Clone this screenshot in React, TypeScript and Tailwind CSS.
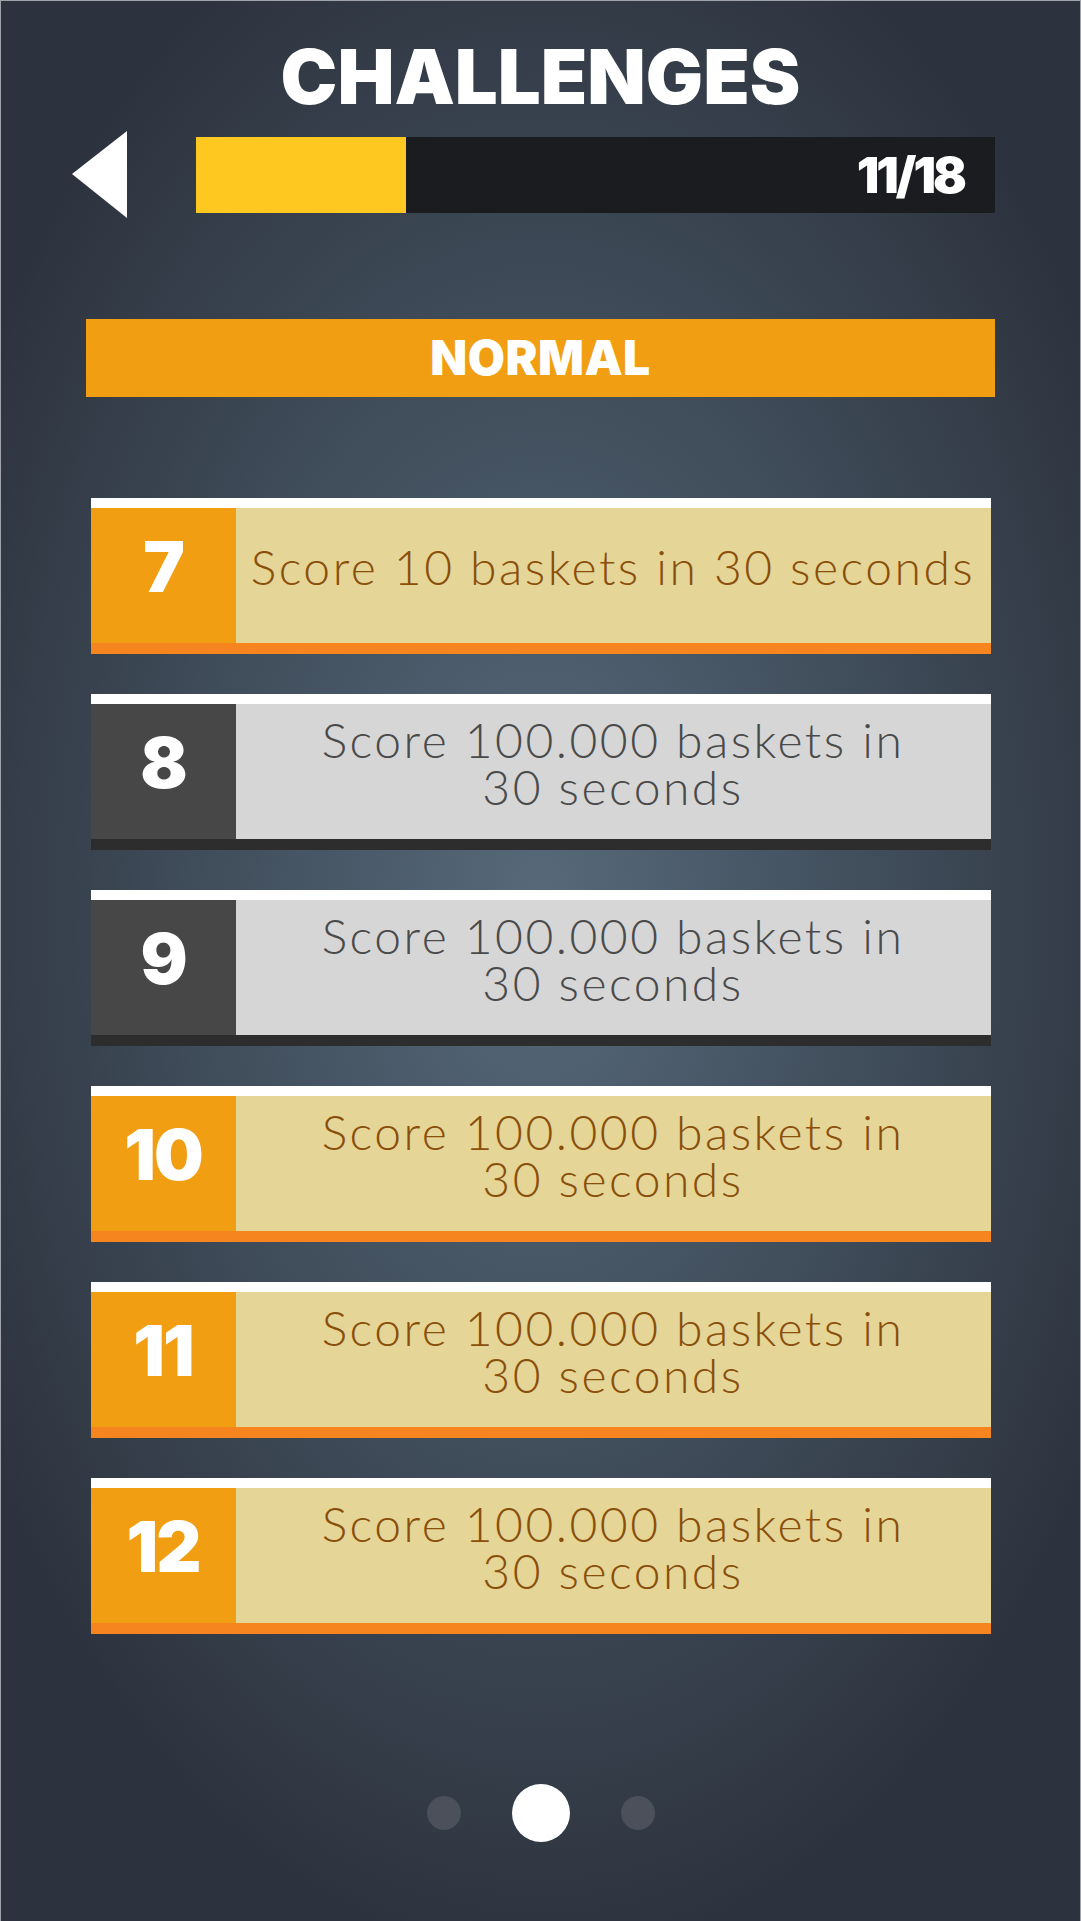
type Challenge = {
  id: number
  text: string
  done: boolean
}

const challenges: Challenge[] = [
  { id: 7, text: "Score 10 baskets in 30 seconds", done: true },
  { id: 8, text: "Score 100.000 baskets in\n30 seconds", done: false },
  { id: 9, text: "Score 100.000 baskets in\n30 seconds", done: false },
  { id: 10, text: "Score 100.000 baskets in\n30 seconds", done: true },
  { id: 11, text: "Score 100.000 baskets in\n30 seconds", done: true },
  { id: 12, text: "Score 100.000 baskets in\n30 seconds", done: true },
]

const heavy = { fontFamily: "Inter, 'Noto Sans', sans-serif" }

function ChallengeCard({ item }: { item: Challenge }) {
  return (
    <div className="flex flex-col w-[900px]">
      <div className="h-[10px] bg-white" />
      <div className={"flex h-[135px] " + (item.done ? "bg-[#e5d597]" : "bg-[#d6d6d6]")}>
        <div
          className={
            "w-[145px] flex items-center justify-center pb-[18px] text-white font-black text-[70px] leading-none tracking-[-2px] " +
            (item.done ? "bg-[#f29e12]" : "bg-[#474747]")
          }
          style={heavy}
        >
          {item.id}
        </div>
        <div
          className={
            "flex-1 flex items-center justify-center text-center whitespace-pre-line px-[6px] pb-[18px] font-light text-[48px] leading-[47px] tracking-[2.5px] " +
            (item.done ? "text-[#8a4f0b]" : "text-[#4a4a4a]")
          }
        >
          {item.text}
        </div>
      </div>
      <div className={"h-[11px] " + (item.done ? "bg-[#f7851f]" : "bg-[#2d2d2d]")} />
    </div>
  )
}

export default function App() {
  return (
    <div
      className="w-[1081px] h-[1921px] flex flex-col items-center border-l border-t border-r border-[#a0a4aa] bg-[radial-gradient(ellipse_60%_55%_at_50%_47%,#57697a_0%,#43515f_45%,#2d333e_100%)]"
      style={{ fontFamily: "Lato, 'Open Sans', sans-serif" }}
    >
      {/* title */}
      <h1 className="mt-[36px] text-white font-black text-[76px] leading-[78px]" style={heavy}>
        CHALLENGES
      </h1>

      {/* back + progress */}
      <div className="mt-[16px] w-full flex items-center pl-[71px]">
        <svg width="55" height="87" viewBox="0 0 55 87" className="shrink-0">
          <polygon points="55,0 55,87 0,43" fill="#ffffff" />
        </svg>
        <div className="ml-[69px] w-[799px] h-[76px] bg-[#1a1c20] flex items-center">
          <div className="w-[210px] h-full bg-[#ffc820]" />
          <div
            className="flex-1 text-right pr-[31px] text-white font-black text-[50px] leading-none tracking-[-3px]"
            style={heavy}
          >
            11/18
          </div>
        </div>
      </div>

      {/* difficulty */}
      <div
        className="mt-[101px] w-[909px] h-[78px] bg-[#f29e12] flex items-center justify-center text-white font-black text-[48px] leading-none tracking-[0.5px]"
        style={heavy}
      >
        NORMAL
      </div>

      {/* list */}
      <div className="mt-[101px] flex flex-col gap-[40px]">
        {challenges.map((c) => (
          <ChallengeCard key={c.id} item={c} />
        ))}
      </div>

      {/* pager */}
      <div className="mt-[150px] flex items-center gap-[51px]">
        <div className="w-[34px] h-[34px] rounded-full bg-[#4b505b]" />
        <div className="w-[58px] h-[58px] rounded-full bg-white" />
        <div className="w-[34px] h-[34px] rounded-full bg-[#4b505b]" />
      </div>
    </div>
  )
}
